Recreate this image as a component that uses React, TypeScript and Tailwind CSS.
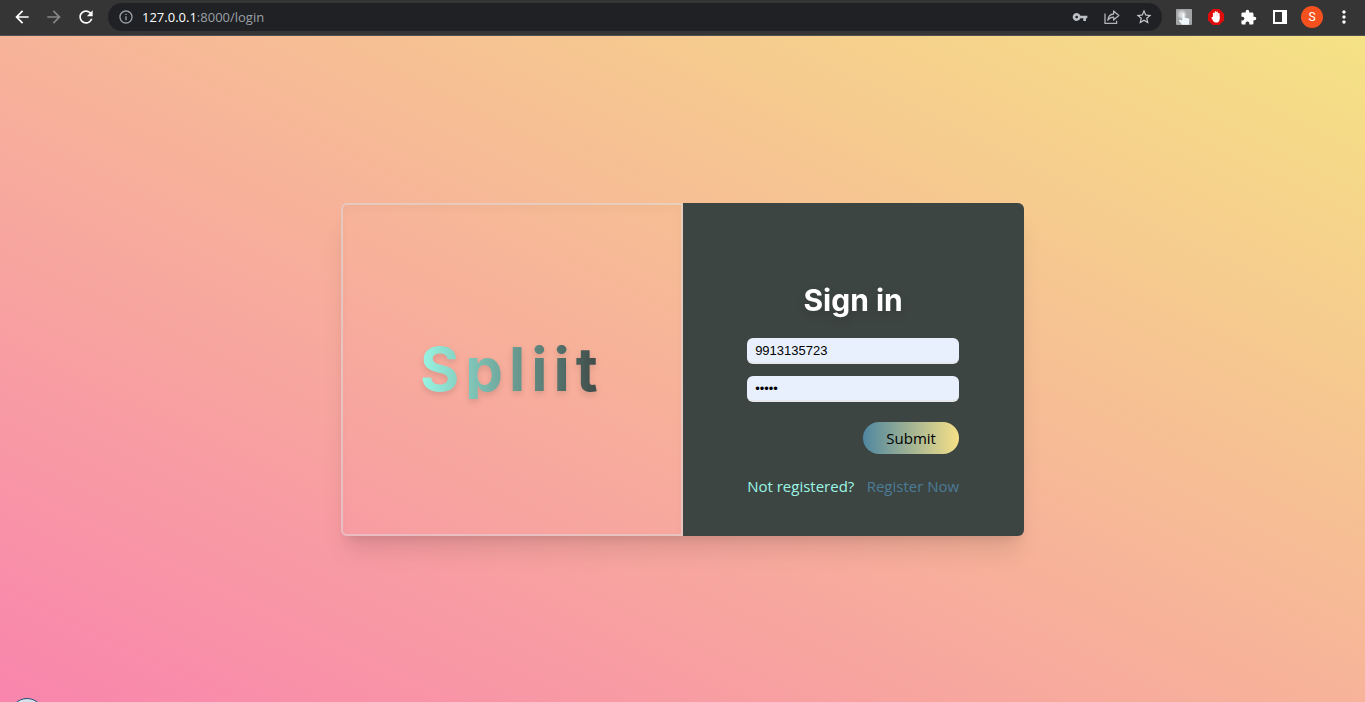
import { useState } from "react";
import type { ReactNode } from "react";
import {
  MdArrowBack,
  MdArrowForward,
  MdExtension,
  MdInfoOutline,
  MdMoreVert,
  MdRefresh,
  MdStarBorder,
  MdVpnKey,
} from "react-icons/md";

function BarButton({ label, children }: { label: string; children: ReactNode }) {
  return (
    <button type="button" aria-label={label} className="flex size-6 items-center justify-center">
      {children}
    </button>
  );
}

function ShareIcon() {
  return (
    <svg width="16" height="16" viewBox="0 0 16 16" fill="none" stroke="#b0b3b8" strokeWidth="1.3">
      <path d="M1 4.500V14.300H12.600V11.800" />
      <path d="M3.800 11.200C4.200 7.400 6.300 5.300 9.600 5V2L14.800 6.600L9.600 11.100V8.100C7 8.100 5.200 9.100 3.800 11.200Z" strokeLinejoin="round" />
    </svg>
  );
}

function ClickerIcon() {
  return (
    <svg width="16" height="16" viewBox="0 0 16 16">
      <rect width="16" height="16" rx="1" fill="#a3a5a6" />
      <circle cx="6" cy="5.600" r="4.400" fill="#c3c5c6" />
      <circle cx="6" cy="5.600" r="2.600" fill="#d7d9da" />
      <path
        d="M7.200 4.200c.9 0 1.300.5 1.300 1.300v3l3.400.8c1 .2 1.500.8 1.400 1.800L12.800 15.800H6L3 11.800c-.4-.7.4-1.400 1.200-1l2 .8V5.500c0-.8.2-1.300 1-1.300Z"
        fill="#eef7fc"
      />
    </svg>
  );
}

function BlockerIcon() {
  return (
    <svg width="16" height="16" viewBox="0 0 16 16">
      <path d="M4.700 0h6.600L16 4.700v6.600L11.300 16H4.700L0 11.300V4.700Z" fill="#e00b0b" />
      <g stroke="#fff" strokeWidth="1.600" strokeLinecap="round" fill="none">
        <path d="M5.700 9V4.500M7.400 8V3M9.100 8V3.200M10.800 9V4.800M4.200 8.800L6 11.500" />
      </g>
      <path d="M4.900 7.500h6.700v2.700c0 2-1.300 3.400-3.400 3.400-1.700 0-2.600-.9-3.300-2.400Z" fill="#fff" />
    </svg>
  );
}

function SidePanelIcon() {
  return (
    <svg width="14" height="14" viewBox="0 0 14 14">
      <path d="M0 0h14v14H0ZM2 2v10h7V2Z" fill="#fff" fillRule="evenodd" />
    </svg>
  );
}

function BrowserBar() {
  return (
    <header className="flex h-9 shrink-0 items-center gap-2.5 border-b border-[#4f5052] bg-[#353535] pr-[9px] pb-px pl-2.5 text-white">
      <nav className="flex items-center gap-2" aria-label="History">
        <BarButton label="Back">
          <MdArrowBack size={20} />
        </BarButton>
        <BarButton label="Forward">
          <MdArrowForward size={20} className="text-[#868686]" />
        </BarButton>
        <BarButton label="Reload">
          <MdRefresh size={20} />
        </BarButton>
      </nav>
      <div className="flex h-7 min-w-0 flex-1 items-center gap-2 rounded-full bg-[#202124] px-1.5 text-[#9aa0a6]">
        <div className="flex flex-1 items-center gap-1">
          <BarButton label="Site information">
            <MdInfoOutline size={16} />
          </BarButton>
          <p className="font-['Open_Sans','Noto_Sans',sans-serif] text-[13px] leading-5">
            <span className="text-white">127.0.0.1</span>:8000/login
          </p>
        </div>
        <BarButton label="Saved passwords">
          <MdVpnKey size={16} className="text-[#bdc1c6]" />
        </BarButton>
        <BarButton label="Share">
          <ShareIcon />
        </BarButton>
        <BarButton label="Bookmark">
          <MdStarBorder size={18} className="text-[#c4c7cc]" />
        </BarButton>
      </div>
      <div className="flex items-center gap-2">
        <BarButton label="Auto clicker">
          <ClickerIcon />
        </BarButton>
        <BarButton label="Ad blocker">
          <BlockerIcon />
        </BarButton>
        <BarButton label="Extensions">
          <MdExtension size={17} />
        </BarButton>
        <BarButton label="Side panel">
          <SidePanelIcon />
        </BarButton>
        <BarButton label="Profile">
          <span className="flex size-[22px] items-center justify-center rounded-full bg-[#f4511e] font-[Roboto,sans-serif] text-xs">
            S
          </span>
        </BarButton>
        <BarButton label="Menu">
          <MdMoreVert size={20} />
        </BarButton>
      </div>
    </header>
  );
}

function LoginForm() {
  const [phone, setPhone] = useState("9913135723");
  const [password, setPassword] = useState("12345");
  const field =
    "h-[26px] w-full rounded-md border-b-2 border-[#e5e7eb] bg-[#e8f0fe] px-2 font-['Liberation_Sans',sans-serif] text-[13px] text-black outline-none";

  return (
    <form className="flex w-[212px] flex-col" onSubmit={(e) => e.preventDefault()}>
      <h1 className="text-center font-[Inter,sans-serif] text-3xl leading-9 font-bold text-white drop-shadow-lg">
        Sign in
      </h1>
      <div className="mt-5 flex flex-col gap-3">
        <input
          aria-label="Phone number"
          type="text"
          value={phone}
          onChange={(e) => setPhone(e.target.value)}
          className={field}
        />
        <input
          aria-label="Password"
          type="password"
          value={password}
          onChange={(e) => setPassword(e.target.value)}
          className={field}
        />
      </div>
      <button
        type="submit"
        className="mt-5 h-8 w-24 self-end rounded-full bg-linear-to-r/srgb from-[#4f87a0] to-[#f6e087] text-[15px] text-black"
      >
        Submit
      </button>
      <p className="mt-5 flex justify-between text-[15px] leading-6 whitespace-nowrap text-[#9bf6e4]">
        Not registered?
        <a href="#register" className="text-[#4a7c96]">
          Register Now
        </a>
      </p>
    </form>
  );
}

export default function App() {
  return (
    <div className="flex h-screen flex-col overflow-hidden font-['Open_Sans','Noto_Sans',sans-serif]">
      <BrowserBar />
      <main className="relative flex flex-1 items-center justify-center overflow-hidden bg-linear-to-tr/srgb from-[#f985ad] to-[#f5e285]">
        <section className="grid h-1/2 min-h-[320px] w-1/2 min-w-[600px] grid-cols-2 rounded-md shadow-xl">
          <div className="flex items-center justify-center rounded-l-md border-2 border-[#d9dde2]/50 shadow-[inset_0_4px_10px_rgb(0_0_0/0.03)]">
            <span className="bg-linear-to-r/srgb from-[#99f6e4] to-[#3d4543] bg-clip-text font-[Inter,sans-serif] text-6xl font-bold tracking-widest text-transparent drop-shadow-md">
              Spliit
            </span>
          </div>
          <div className="flex items-center justify-center rounded-r-md bg-[#3d4543] pt-[42px]">
            <LoginForm />
          </div>
        </section>
        <div className="absolute top-full left-2.5 -mt-1 size-[34px] rounded-full border border-[#1f4e79] bg-[#d5e0e8]" />
      </main>
    </div>
  );
}
